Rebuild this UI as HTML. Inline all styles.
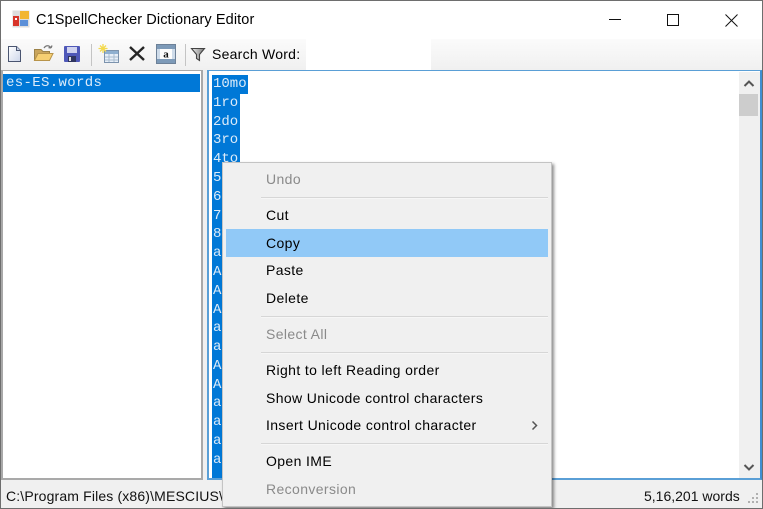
<!DOCTYPE html>
<html><head><meta charset="utf-8"><style>
html,body{margin:0;padding:0}
body{width:763px;height:509px;overflow:hidden;position:relative;background:#f0f0f0;font-family:"Liberation Sans",sans-serif;color:#000}
div,span,svg{position:absolute;box-sizing:border-box}
.t{white-space:nowrap;font-size:14px;line-height:18px}
.mono{font-family:"Liberation Mono",monospace;font-size:14px;line-height:18px;white-space:nowrap}
.sel{background:#0078d7;color:#dcebf9;left:212px;height:19px;padding-left:1px}
.r{background:none;height:18px;width:60px}
.m{left:266px;font-size:14px;line-height:18px;white-space:nowrap;color:#000;letter-spacing:.38px}
.d{color:#8a8a8a}
.sep{left:261px;width:287px;height:1px;background:#d6d6d6;box-shadow:0 1px 0 #f6f6f6}
.ts{width:1px;height:22px;top:44px;background:#c4c4c4}
</style></head><body>
<div style="left:0;top:0;width:763px;height:509px;border:1px solid #6e6e6e;z-index:50;pointer-events:none"></div>
<div style="left:1px;top:1px;width:761px;height:38px;background:#fff"></div>
<svg style="left:12px;top:10px" width="18" height="18" viewBox="0 0 18 18"><rect x="0.5" y="0.5" width="17" height="17" fill="#ddd"/><rect x="8" y="1" width="9" height="8" fill="#f2b632"/><rect x="1" y="6" width="6" height="10" fill="#d8352a"/><rect x="3" y="8" width="2" height="2" fill="#fff"/><rect x="8" y="10" width="8" height="6" fill="#5b8fd8"/></svg>
<div class="t" style="left:36px;top:11px;font-size:14.5px;color:#000;letter-spacing:.1px">C1SpellChecker Dictionary Editor</div>
<svg style="left:609px;top:13px" width="13" height="12"><rect x="0" y="6" width="12" height="1" fill="#111"/></svg>
<svg style="left:667px;top:14px" width="12" height="12"><rect x="0.5" y="0.5" width="11" height="11" fill="none" stroke="#111"/></svg>
<svg style="left:725px;top:14px" width="13" height="13"><path d="M0.5 0.5L12.5 12.5M12.5 0.5L0.5 12.5" stroke="#111" stroke-width="1"/></svg>

<div style="left:1px;top:39px;width:761px;height:31px;background:linear-gradient(#fbfbfb,#f0f0f0)"></div>
<svg style="left:6px;top:45px" width="17" height="18"><defs><linearGradient id="p" x1="0" y1="0" x2="1" y2="1"><stop offset="0" stop-color="#fff"/><stop offset="1" stop-color="#cdd6ea"/></linearGradient></defs><path d="M2.5 1.5H10.5L14.5 5.5V16.5H2.5Z" fill="url(#p)" stroke="#4a5570"/><path d="M10.5 1.5V5.5H14.5" fill="#c5cfe4" stroke="#4a5570"/></svg>
<svg style="left:33px;top:44px" width="21" height="19"><path d="M1.5 5.5H8L10 7.5H16.5V16.5H1.5Z" fill="#c9a55c" stroke="#9c8248"/><path d="M1.5 16.5L5 9.5H20L16.5 16.5Z" fill="#f6cf72" stroke="#b8944a"/><path d="M11 4C13 1 16 1 18 4M18 4L19 1.5M18 4L15.5 3.6" fill="none" stroke="#777" stroke-width="1.3"/></svg>
<svg style="left:63px;top:45px" width="18" height="18"><rect x="1" y="1" width="16" height="16" rx="1" fill="#4f58b8"/><rect x="4" y="2" width="10" height="6" fill="#d0d3ef"/><rect x="5" y="11" width="8" height="6" fill="#2f3560"/><rect x="6" y="12" width="2" height="4" fill="#ddd"/></svg>
<div class="ts" style="left:91px"></div>
<svg style="left:98px;top:44px" width="22" height="20"><rect x="6.5" y="6.5" width="14" height="12" fill="#e8eff8" stroke="#7c93ad"/><rect x="7" y="7" width="13" height="3" fill="#8fb0d0"/><path d="M7 13H20M7 16H20M11 10V18M16 10V18" stroke="#a9bccf"/><path d="M5 0V9M0.5 4.5H9.5M2 1.5L8 7.5M8 1.5L2 7.5" stroke="#f3d94e" stroke-width="1.3"/></svg>
<svg style="left:128px;top:45px" width="18" height="17"><path d="M2 2L16 15M16 2L2 15" stroke="#262626" stroke-width="2.4"/></svg>
<svg style="left:156px;top:44px" width="20" height="20"><rect x="0.5" y="0.5" width="19" height="19" fill="#cfdcea" stroke="#6d8198"/><rect x="1" y="1" width="18" height="4" fill="#7d9ab8"/><rect x="1" y="15" width="18" height="4" fill="#7d9ab8"/><rect x="4" y="5" width="12" height="10" fill="#fdfdfd"/><text x="10" y="13.5" font-family="Liberation Serif,serif" font-weight="bold" font-size="11" text-anchor="middle" fill="#111">a</text></svg>
<div class="ts" style="left:185px"></div>
<svg style="left:190px;top:47px" width="16" height="15"><defs><linearGradient id="f" x1="0" y1="0" x2="1" y2="0"><stop offset="0" stop-color="#eee"/><stop offset="1" stop-color="#777"/></linearGradient></defs><path d="M1.5 1.5H14.5L9.5 7.5V13.5L6.5 11.5V7.5Z" fill="url(#f)" stroke="#444" stroke-width="1.1"/></svg>
<div class="t" style="left:212px;top:45px;color:#000;letter-spacing:.25px">Search Word:</div>
<div style="left:306px;top:39px;width:125px;height:31px;background:#fff"></div>

<!-- left list -->
<div style="left:1px;top:70px;width:202px;height:410px;background:#fff;border:2px solid #a9a9a9;border-top-width:1px"></div>
<div class="mono" style="left:3px;top:74px;width:197px;height:18px;background:#0078d7;color:#dcebf9;padding-left:3px;letter-spacing:.35px">es-ES.words</div>

<!-- right text -->
<div style="left:207px;top:70px;width:555px;height:410px;background:#fff;border:2px solid #5a9fd6;border-top-width:1px;border-right-color:#3f8fd2"></div>
<div class="mono sel" style="top:75px;width:36px;">10mo</div>
<div class="mono sel" style="top:94px;width:28px;">1ro</div>
<div class="mono sel" style="top:113px;width:28px;">2do</div>
<div class="mono sel" style="top:131px;width:28px;">3ro</div>
<div class="mono sel" style="top:150px;width:28px;">4to</div>
<div style="left:212px;top:168px;width:12px;height:310px;background:#0078d7"></div>
<div class="mono sel r" style="top:169px">5to</div>
<div class="mono sel r" style="top:188px">6to</div>
<div class="mono sel r" style="top:207px">7mo</div>
<div class="mono sel r" style="top:225px">8vo</div>
<div class="mono sel r" style="top:244px">a</div>
<div class="mono sel r" style="top:263px">A</div>
<div class="mono sel r" style="top:282px">A</div>
<div class="mono sel r" style="top:301px">A</div>
<div class="mono sel r" style="top:319px">a</div>
<div class="mono sel r" style="top:338px">a</div>
<div class="mono sel r" style="top:357px">Aa</div>
<div class="mono sel r" style="top:376px">Aa</div>
<div class="mono sel r" style="top:394px">aa</div>
<div class="mono sel r" style="top:413px">aa</div>
<div class="mono sel r" style="top:432px">aa</div>
<div class="mono sel r" style="top:451px">aa</div>
<div style="left:739px;top:72px;width:21px;height:406px;background:#f0f0f0"></div>
<div style="left:739px;top:94px;width:19px;height:22px;background:#cdcdcd"></div>
<svg style="left:743px;top:79px" width="12" height="9"><path d="M1.5 7L6 2.5L10.5 7" fill="none" stroke="#555" stroke-width="2"/></svg>
<svg style="left:743px;top:463px" width="12" height="9"><path d="M1.5 2L6 6.5L10.5 2" fill="none" stroke="#555" stroke-width="2"/></svg>

<!-- status -->
<div class="t" style="left:6px;top:487px;color:#111;letter-spacing:.15px">C:\Program Files (x86)\MESCIUS\</div>
<div class="t" style="left:644px;top:487px;color:#111">5,16,201 words</div>
<svg style="left:747px;top:492px" width="13" height="13" fill="#b0b0b0"><rect x="9" y="1" width="2" height="2"/><rect x="5" y="5" width="2" height="2"/><rect x="9" y="5" width="2" height="2"/><rect x="1" y="9" width="2" height="2"/><rect x="5" y="9" width="2" height="2"/><rect x="9" y="9" width="2" height="2"/></svg>

<!-- context menu -->
<div style="left:222px;top:162px;width:330px;height:345px;background:#f0f0f0;border:1px solid #c4c4c4;box-shadow:2px 2px 3px rgba(0,0,0,.45);z-index:1"></div>
<div style="z-index:2;left:0;top:0;width:763px;height:509px">
<div class="m d" style="top:170px">Undo</div>
<div class="sep" style="top:197px"></div>
<div class="m" style="top:206px">Cut</div>
<div style="left:226px;top:229px;width:322px;height:28px;background:#91c9f7"></div>
<div class="m" style="top:234px">Copy</div>
<div class="m" style="top:261px">Paste</div>
<div class="m" style="top:289px">Delete</div>
<div class="sep" style="top:316px"></div>
<div class="m d" style="top:325px">Select All</div>
<div class="sep" style="top:352px"></div>
<div class="m" style="top:361px">Right to left Reading order</div>
<div class="m" style="top:389px">Show Unicode control characters</div>
<div class="m" style="top:416px">Insert Unicode control character</div>
<svg style="left:531px;top:420px" width="8" height="11"><path d="M1.5 1.5L5.5 5.5L1.5 9.5" fill="none" stroke="#555" stroke-width="1.5"/></svg>
<div class="sep" style="top:443px"></div>
<div class="m" style="top:452px">Open IME</div>
<div class="m d" style="top:480px">Reconversion</div>
</div>
</body></html>
